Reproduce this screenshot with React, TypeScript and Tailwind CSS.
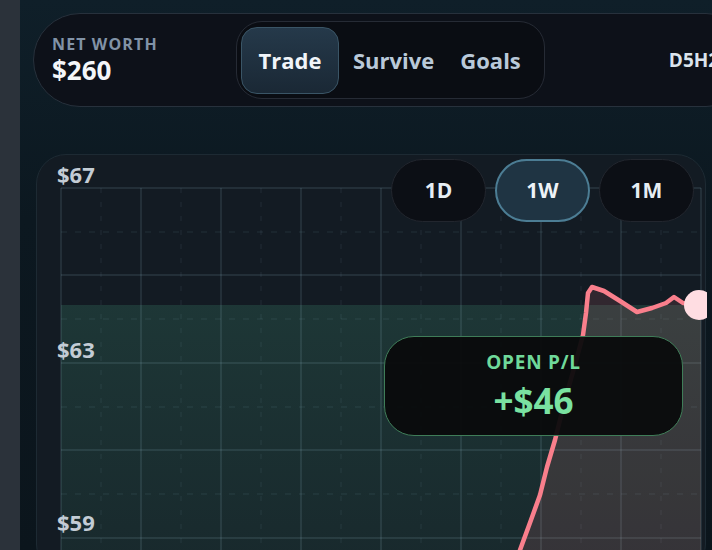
const TABS = ['Trade', 'Survive', 'Goals']
const PERIODS = ['1D', '1W', '1M']

// chart points in card coordinates (card sits at 36,155 on the page)
const LINE: [number, number][] = [
  [476, 420], [483, 395], [494, 365], [503, 340], [510, 312], [518, 285], [528, 245],
  [538, 210], [546, 180], [549, 158], [551, 138], [555, 132], [567, 136], [583, 146],
  [600, 157], [615, 153], [629, 148], [637, 142], [646, 148], [662, 149],
]

const V_SOLID = [24, 104, 184, 264, 344, 424, 504, 584, 664]
const V_DASH = [64, 144, 224, 304, 384, 464, 544, 624]
const H_SOLID = [33, 120, 208, 295, 383]
const H_DASH = [77, 164, 252, 339]

function ChartSvg() {
  const line = LINE.map(([x, y]) => `${x},${y}`).join(' ')
  const fill = `${line} 664,149 664,420 476,420`
  return (
    <svg className="absolute inset-0" width="670" height="420" viewBox="0 0 670 420">
      <defs>
        <linearGradient id="band" x1="0" y1="0" x2="0" y2="1">
          <stop offset="0" stopColor="#3d8a70" stopOpacity="0.25" />
          <stop offset="1" stopColor="#3d8a70" stopOpacity="0.12" />
        </linearGradient>
      </defs>
      <rect x="24" y="150" width="640" height="270" fill="url(#band)" />
      {V_DASH.map((x) => (
        <line key={`vd${x}`} x1={x} y1={33} x2={x} y2={420} stroke="#9fd0d8" strokeOpacity="0.1" strokeDasharray="5 9" />
      ))}
      {H_DASH.map((y) => (
        <line key={`hd${y}`} x1={24} y1={y} x2={664} y2={y} stroke="#9fd0d8" strokeOpacity="0.12" strokeDasharray="6 8" />
      ))}
      {V_SOLID.map((x) => (
        <line key={`vs${x}`} x1={x} y1={33} x2={x} y2={420} stroke="#9fd0d8" strokeOpacity="0.16" strokeWidth="1.5" />
      ))}
      {H_SOLID.map((y) => (
        <line key={`hs${y}`} x1={24} y1={y} x2={664} y2={y} stroke="#9fd0d8" strokeOpacity="0.16" strokeWidth="1.5" />
      ))}
      <polygon points={fill} fill="#ff7887" fillOpacity="0.13" />
      <polyline points={line} fill="none" stroke="#f97f8c" strokeWidth="4.5" strokeLinejoin="round" strokeLinecap="round" />
      <circle cx="662" cy="150" r="15" fill="#ffdde2" />
    </svg>
  )
}

export default function App() {
  return (
    <div className="flex h-[550px] w-[712px] overflow-hidden bg-[#0d1a22] font-['Open_Sans',sans-serif] font-bold">
      <div className="w-[20px] flex-none bg-[#2b323a]" />

      <div className="flex min-w-0 flex-1 flex-col bg-[linear-gradient(180deg,#0f1f29_0%,#0c1820_40%,#0b151c_100%)]">
        {/* header */}
        <div className="ml-[13px] mt-[13px] flex h-[94px] w-[720px] flex-none items-center rounded-[47px] border-[1.5px] border-[#27313c] bg-[#0d1119] pl-[18px]">
          <div className="flex w-[184px] flex-none flex-col">
            <span className="text-[16px] leading-[18px] tracking-[0.07em] text-[#8193a7]">NET WORTH</span>
            <span className="mt-[2px] text-[26px] leading-[30px] text-[#f3f6f9]">$260</span>
          </div>

          <div className="flex h-[78px] flex-none items-center rounded-[26px] border-[1.5px] border-[#262b35] bg-[#0a0d13] pl-[4px] pr-[10px]">
            {TABS.map((t, i) =>
              i === 0 ? (
                <div
                  key={t}
                  className="mr-[1px] flex h-[67px] w-[98px] items-center justify-center rounded-[16px] border border-[#3a5566] bg-[linear-gradient(180deg,#25394a,#1a2835)] text-[22px] text-[#f1f5f9]"
                >
                  {t}
                </div>
              ) : (
                <div key={t} className="flex h-[67px] items-center pl-[13px] pr-[13px] text-[22px] text-[#b9c9d9]">
                  {t}
                </div>
              ),
            )}
          </div>

          <span className="ml-[124px] text-[19px] text-[#dbe4ec]">D5H2</span>
        </div>

        {/* chart card */}
        <div className="relative ml-[16px] mt-[47px] h-[420px] w-[670px] flex-none rounded-[30px] border-[1.5px] border-[#1d2a33] bg-[#131b23]">
          <ChartSvg />

          <span className="absolute left-[20px] top-[3px] text-[22px] text-[#c3ccd5]">$67</span>
          <span className="absolute left-[20px] top-[178px] text-[22px] text-[#c3ccd5]">$63</span>
          <span className="absolute left-[20px] top-[351px] text-[22px] text-[#c3ccd5]">$59</span>

          <div className="absolute right-[11px] top-[4px] flex gap-[9px]">
            {PERIODS.map((p) => (
              <div
                key={p}
                className={
                  p === '1W'
                    ? 'flex h-[63px] w-[95px] items-center justify-center rounded-full border-2 border-[#4c7d94] bg-[#1f3443] text-[21px] text-[#eef3f7]'
                    : 'flex h-[63px] w-[95px] items-center justify-center rounded-full border-[1.5px] border-[#22262e] bg-[#0c0f15] text-[21px] text-[#e6edf3]'
                }
              >
                {p}
              </div>
            ))}
          </div>

          <div className="absolute left-[347px] top-[181px] flex h-[100px] w-[299px] flex-col items-center gap-[2px] rounded-[30px] border-[1.5px] border-[#3f7d58] bg-[#090b0c]/95 pt-[12px]">
            <span className="text-[19px] leading-[26px] tracking-[0.04em] text-[#6fd99a]">OPEN P/L</span>
            <span className="text-[35px] leading-[48px] text-[#7ae2a1]">+$46</span>
          </div>
        </div>
      </div>
    </div>
  )
}
